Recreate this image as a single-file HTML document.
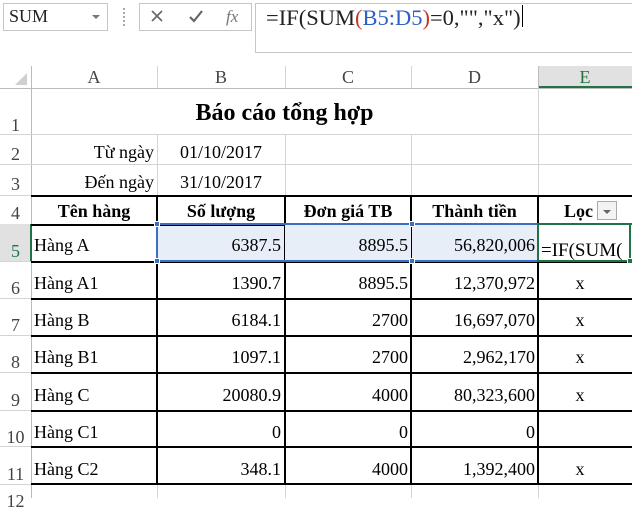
<!DOCTYPE html>
<html><head><meta charset="utf-8"><style>
*{margin:0;padding:0;box-sizing:border-box}
body{width:632px;height:498px;overflow:hidden;background:#fff;position:relative;font-family:"Liberation Serif",serif;color:#000}
.a{position:absolute}
.t{position:absolute;font-size:18px;line-height:18px;white-space:nowrap}
.hl{position:absolute;height:1px;background:#d4d4d4}
.vl{position:absolute;width:1px;background:#d4d4d4}
.bh{position:absolute;height:2px;background:#000}
.bv{position:absolute;width:2px;background:#000}
.rn{position:absolute;left:0;width:31px;text-align:center;font-size:18px;color:#444}
.cn{position:absolute;top:67px;font-size:18px;color:#444;text-align:center}
</style></head><body>
<div class="a" style="left:3px;top:3px;width:105px;height:28px;border:1px solid #c6c6c6"></div>
<div class="t" style="left:9px;top:7px;font-size:18px;color:#222">SUM</div>
<div class="a" style="left:92px;top:15px;border-left:4px solid transparent;border-right:4px solid transparent;border-top:4px solid #777"></div>
<div class="a" style="left:123px;top:8px;width:2px;height:18px;border-left:2px dotted #aaa"></div>
<div class="a" style="left:139px;top:3px;width:113px;height:28px;border:1px solid #c6c6c6"></div>
<svg class="a" style="left:150px;top:8px" width="100" height="18"><path d="M2 3 L12 13 M12 3 L2 13" stroke="#666" stroke-width="1.6"/><path d="M40 9 L44 13 L52 3" stroke="#666" stroke-width="2.2" fill="none"/><text x="76" y="14" font-family="Liberation Serif" font-style="italic" font-size="17" fill="#777">fx</text></svg>
<div class="a" style="left:255px;top:3px;width:380px;height:50px;border:1px solid #c6c6c6"></div>
<div class="t" style="left:266px;top:6px;font-size:22.5px;line-height:23px;color:#222">=IF(SUM<span style="color:#c0392b">(</span><span style="color:#2e5fc4">B5:D5</span><span style="color:#c0392b">)</span>=0,"","x")</div>
<div class="a" style="left:522px;top:5px;width:1px;height:22px;background:#000"></div>
<div class="a" style="left:0;top:88px;width:632px;height:1px;background:#bbb"></div>
<div class="a" style="left:31px;top:66px;width:1px;height:432px;background:#bbb"></div>
<svg class="a" style="left:14px;top:72px" width="14" height="14"><path d="M13 1 L13 13 L1 13 Z" fill="#d0d0d0"/></svg>
<div class="a" style="left:538px;top:66px;width:94px;height:22px;background:#e1e1e1"></div>
<div class="a" style="left:538px;top:86px;width:94px;height:2px;background:#217346"></div>
<div class="vl" style="left:157px;top:66px;height:22px"></div>
<div class="vl" style="left:285px;top:66px;height:22px"></div>
<div class="vl" style="left:411px;top:66px;height:22px"></div>
<div class="vl" style="left:538px;top:66px;height:22px;background:#bbb"></div>
<div class="cn" style="left:31px;width:126px">A</div>
<div class="cn" style="left:157px;width:128px">B</div>
<div class="cn" style="left:285px;width:126px">C</div>
<div class="cn" style="left:411px;width:127px">D</div>
<div class="cn" style="left:538px;width:94px;color:#217346">E</div>
<div class="a" style="left:0;top:224px;width:31px;height:37px;background:#e1e1e1"></div>
<div class="a" style="left:30px;top:224px;width:2px;height:37px;background:#217346"></div>
<div class="rn" style="top:115px">1</div>
<div class="rn" style="top:144px">2</div>
<div class="rn" style="top:174px">3</div>
<div class="rn" style="top:203px">4</div>
<div class="rn" style="top:241px;color:#217346">5</div>
<div class="rn" style="top:278px">6</div>
<div class="rn" style="top:315px">7</div>
<div class="rn" style="top:352px">8</div>
<div class="rn" style="top:390px">9</div>
<div class="rn" style="top:427px">10</div>
<div class="rn" style="top:464px">11</div>
<div class="rn" style="top:491px">12</div>
<div class="hl" style="left:0;top:134px;width:632px"></div>
<div class="hl" style="left:0;top:164px;width:632px"></div>
<div class="hl" style="left:0;top:195px;width:31px"></div>
<div class="hl" style="left:0;top:261px;width:31px"></div>
<div class="hl" style="left:0;top:298px;width:31px"></div>
<div class="hl" style="left:0;top:335px;width:31px"></div>
<div class="hl" style="left:0;top:372px;width:31px"></div>
<div class="hl" style="left:0;top:410px;width:31px"></div>
<div class="hl" style="left:0;top:446px;width:31px"></div>
<div class="hl" style="left:0;top:484px;width:31px"></div>
<div class="vl" style="left:157px;top:134px;height:62px"></div>
<div class="vl" style="left:285px;top:134px;height:62px"></div>
<div class="vl" style="left:411px;top:134px;height:62px"></div>
<div class="vl" style="left:538px;top:88px;height:108px"></div>
<div class="vl" style="left:157px;top:484px;height:14px"></div>
<div class="vl" style="left:285px;top:484px;height:14px"></div>
<div class="vl" style="left:411px;top:484px;height:14px"></div>
<div class="vl" style="left:538px;top:484px;height:14px"></div>
<div class="a" style="left:158px;top:225px;width:380px;height:36px;background:#e8eef8"></div>
<div class="bh" style="left:31px;top:195px;width:601px"></div>
<div class="bh" style="left:31px;top:224px;width:601px"></div>
<div class="bh" style="left:31px;top:261px;width:601px"></div>
<div class="bh" style="left:31px;top:298px;width:601px"></div>
<div class="bh" style="left:31px;top:335px;width:601px"></div>
<div class="bh" style="left:31px;top:372px;width:601px"></div>
<div class="bh" style="left:31px;top:410px;width:601px"></div>
<div class="bh" style="left:31px;top:446px;width:601px"></div>
<div class="bh" style="left:31px;top:483px;width:601px"></div>
<div class="bv" style="left:156px;top:195px;height:290px"></div>
<div class="bv" style="left:284px;top:195px;height:290px"></div>
<div class="bv" style="left:410px;top:195px;height:290px"></div>
<div class="bv" style="left:537px;top:195px;height:290px"></div>
<div class="a" style="left:285px;top:225px;width:126px;height:36px;background:#e8eef8"></div>
<div class="a" style="left:412px;top:225px;width:126px;height:36px;background:#e8eef8"></div>
<div class="a" style="left:156px;top:223px;width:382px;height:39px;border:2px solid #3a6fc4;border-right:none"></div>
<div class="a" style="left:538px;top:224px;width:94px;height:37px;background:#fff"></div>
<div class="a" style="left:537px;top:223px;width:95px;height:39px;border:2px solid #217346;border-right:none"></div>
<div class="a" style="left:629px;top:223px;width:2px;height:39px;background:#217346"></div>
<div class="a" style="left:627px;top:258px;width:6px;height:6px;background:#217346;border:1px solid #fff"></div>
<div class="a" style="left:154px;top:221px;width:6px;height:6px;background:#3a6fc4;border:1px solid #fff"></div>
<div class="a" style="left:154px;top:258px;width:6px;height:6px;background:#3a6fc4;border:1px solid #fff"></div>
<div class="a" style="left:409px;top:221px;width:6px;height:6px;background:#3a6fc4;border:1px solid #fff"></div>
<div class="a" style="left:409px;top:258px;width:6px;height:6px;background:#3a6fc4;border:1px solid #fff"></div>
<div class="t" style="left:31px;width:507px;top:101px;text-align:center;font-weight:bold;font-size:24px;line-height:24px">Báo cáo tổng hợp</div>
<div class="t" style="left:31px;width:123px;top:143px;text-align:right">Từ ngày</div>
<div class="t" style="left:157px;width:128px;top:143px;text-align:center">01/10/2017</div>
<div class="t" style="left:31px;width:123px;top:173px;text-align:right">Đến ngày</div>
<div class="t" style="left:157px;width:128px;top:173px;text-align:center">31/10/2017</div>
<div class="t" style="left:31px;width:126px;top:202px;text-align:center;font-weight:bold">Tên hàng</div>
<div class="t" style="left:157px;width:128px;top:202px;text-align:center;font-weight:bold">Số lượng</div>
<div class="t" style="left:285px;width:126px;top:202px;text-align:center;font-weight:bold">Đơn giá TB</div>
<div class="t" style="left:411px;width:127px;top:202px;text-align:center;font-weight:bold">Thành tiền</div>
<div class="t" style="left:538px;width:94px;top:202px;padding-left:26px;font-weight:bold">Lọc</div>
<div class="a" style="left:597px;top:201px;width:20px;height:19px;background:#f3f3f3;border:1px solid #aaa"></div>
<div class="a" style="left:603px;top:210px;border-left:4px solid transparent;border-right:4px solid transparent;border-top:4px solid #666"></div>

<div class="t" style="left:34px;top:236px">Hàng A</div>
<div class="t" style="left:157px;width:124px;top:236px;text-align:right">6387.5</div>
<div class="t" style="left:285px;width:123px;top:236px;text-align:right">8895.5</div>
<div class="t" style="left:411px;width:124px;top:236px;text-align:right">56,820,006</div>
<div class="t" style="left:541px;top:241px;width:88px;overflow:hidden;font-size:19px;line-height:19px">=IF(SUM(</div>

<div class="t" style="left:34px;top:274px">Hàng A1</div>
<div class="t" style="left:157px;width:124px;top:274px;text-align:right">1390.7</div>
<div class="t" style="left:285px;width:123px;top:274px;text-align:right">8895.5</div>
<div class="t" style="left:411px;width:124px;top:274px;text-align:right">12,370,972</div>
<div class="t" style="left:538px;width:84px;top:274px;text-align:center">x</div>

<div class="t" style="left:34px;top:311px">Hàng B</div>
<div class="t" style="left:157px;width:124px;top:311px;text-align:right">6184.1</div>
<div class="t" style="left:285px;width:123px;top:311px;text-align:right">2700</div>
<div class="t" style="left:411px;width:124px;top:311px;text-align:right">16,697,070</div>
<div class="t" style="left:538px;width:84px;top:311px;text-align:center">x</div>

<div class="t" style="left:34px;top:348px">Hàng B1</div>
<div class="t" style="left:157px;width:124px;top:348px;text-align:right">1097.1</div>
<div class="t" style="left:285px;width:123px;top:348px;text-align:right">2700</div>
<div class="t" style="left:411px;width:124px;top:348px;text-align:right">2,962,170</div>
<div class="t" style="left:538px;width:84px;top:348px;text-align:center">x</div>

<div class="t" style="left:34px;top:386px">Hàng C</div>
<div class="t" style="left:157px;width:124px;top:386px;text-align:right">20080.9</div>
<div class="t" style="left:285px;width:123px;top:386px;text-align:right">4000</div>
<div class="t" style="left:411px;width:124px;top:386px;text-align:right">80,323,600</div>
<div class="t" style="left:538px;width:84px;top:386px;text-align:center">x</div>

<div class="t" style="left:34px;top:423px">Hàng C1</div>
<div class="t" style="left:157px;width:124px;top:423px;text-align:right">0</div>
<div class="t" style="left:285px;width:123px;top:423px;text-align:right">0</div>
<div class="t" style="left:411px;width:124px;top:423px;text-align:right">0</div>

<div class="t" style="left:34px;top:460px">Hàng C2</div>
<div class="t" style="left:157px;width:124px;top:460px;text-align:right">348.1</div>
<div class="t" style="left:285px;width:123px;top:460px;text-align:right">4000</div>
<div class="t" style="left:411px;width:124px;top:460px;text-align:right">1,392,400</div>
<div class="t" style="left:538px;width:84px;top:460px;text-align:center">x</div>
</body></html>
